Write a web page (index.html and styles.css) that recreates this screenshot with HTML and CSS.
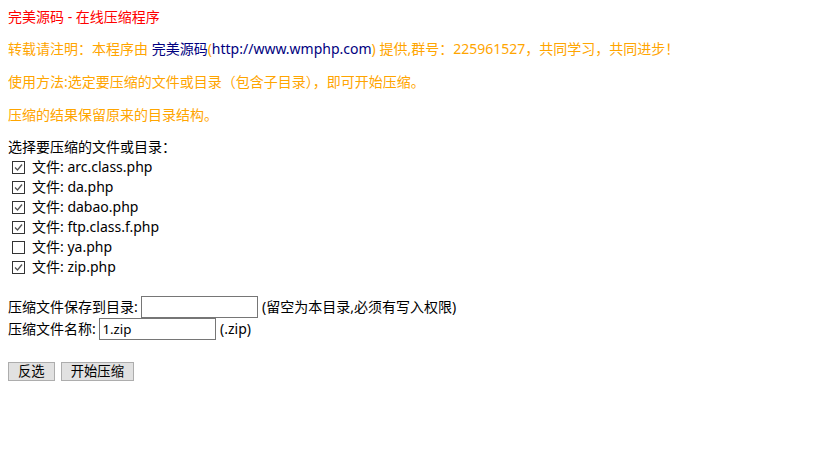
FILE: index.html
```html
<!DOCTYPE html>
<html lang="zh-CN">
<head>
<meta charset="utf-8">
<title>完美源码 - 在线压缩程序</title>
<link rel="stylesheet" href="styles.css">
</head>
<body>
<div class="title">完美源码 - 在线压缩程序</div>
<p class="note">转载请注明：本程序由 <a class="link" href="#">完美源码</a>(<a class="link" href="#">http://www.wmphp.com</a>) 提供,群号：225961527，共同学习，共同进步！</p>
<p class="note">使用方法:选定要压缩的文件或目录（包含子目录），即可开始压缩。</p>
<p class="note">压缩的结果保留原来的目录结构。</p>
<form class="form">
  <div class="label">选择要压缩的文件或目录：</div>
  <label class="item"><input type="checkbox" class="cb" checked><span>文件: arc.class.php</span></label>
  <label class="item"><input type="checkbox" class="cb" checked><span>文件: da.php</span></label>
  <label class="item"><input type="checkbox" class="cb" checked><span>文件: dabao.php</span></label>
  <label class="item"><input type="checkbox" class="cb" checked><span>文件: ftp.class.f.php</span></label>
  <label class="item"><input type="checkbox" class="cb"><span>文件: ya.php</span></label>
  <label class="item"><input type="checkbox" class="cb" checked><span>文件: zip.php</span></label>
  <div class="field first">压缩文件保存到目录: <input type="text" class="txt"> (留空为本目录,必须有写入权限)</div>
  <div class="field">压缩文件名称: <input type="text" class="txt" value="1.zip"> (.zip)</div>
  <div class="buttons">
    <button type="button" class="btn">反选</button>
    <button type="button" class="btn">开始压缩</button>
  </div>
</form>
</body>
</html>
```
FILE: styles.css
```css
html, body {
  background: #fff;
}
body {
  margin: 8px;
  font-family: "Noto Sans", "Noto Sans CJK SC", sans-serif;
  font-size: 14px;
  color: #000;
}
.title {
  color: #ff0000;
  line-height: 17px;
}
.note {
  color: #ffa500;
  margin: 14px 0 0;
  line-height: 19px;
}
.link {
  color: #000080;
  text-decoration: none;
}
.form {
  margin: 13px 0 0;
}
.label {
  line-height: 20px;
}
.item {
  display: flex;
  align-items: center;
  height: 20px;
  line-height: 20px;
}
.cb {
  appearance: none;
  -webkit-appearance: none;
  box-sizing: border-box;
  width: 13px;
  height: 13px;
  margin: 1px 7px 0 4px;
  border: 1px solid #333;
  background: #fff;
}
.cb:checked {
  background: #fff url("data:image/svg+xml,%3Csvg xmlns='http://www.w3.org/2000/svg' width='11' height='11' viewBox='0 0 11 11'%3E%3Cpath d='M2 5.5 L4.5 8 L9 2.5' fill='none' stroke='%23555' stroke-width='1.3'/%3E%3C/svg%3E") center / 11px 11px no-repeat;
}
.field {
  height: 22px;
  line-height: 22px;
}
.field.first {
  margin-top: 19px;
}
.txt {
  box-sizing: border-box;
  width: 117px;
  height: 22px;
  margin: 0;
  padding: 1px 2px;
  border: 1px solid #767676;
  font-family: "Noto Sans", "Noto Sans CJK SC", sans-serif;
  font-size: 13.33px;
  vertical-align: top;
}
.buttons {
  margin-top: 22px;
  display: flex;
  gap: 6px;
}
.btn {
  box-sizing: border-box;
  height: 19px;
  margin: 0;
  padding: 0 9px;
  border: 1px solid #adadad;
  background: #e1e1e1;
  font-family: "Noto Sans", "Noto Sans CJK SC", sans-serif;
  font-size: 13.33px;
  line-height: 17px;
  color: #000;
}
```
